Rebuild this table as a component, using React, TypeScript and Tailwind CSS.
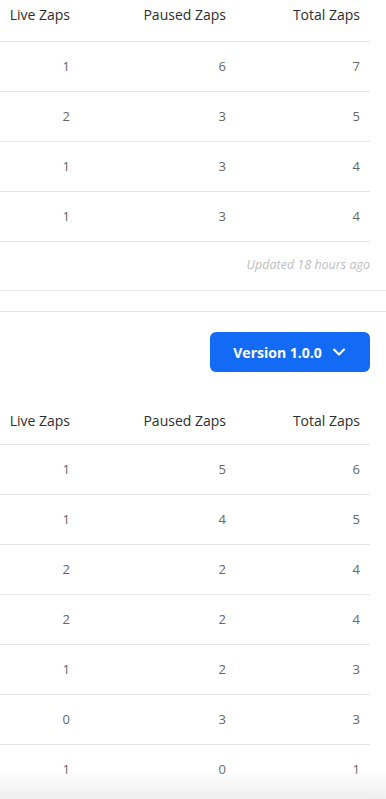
import { ChevronDown } from 'lucide-react';

type Row = [number, number, number];

const firstRows: Row[] = [
  [1, 6, 7],
  [2, 3, 5],
  [1, 3, 4],
  [1, 3, 4],
];

const secondRows: Row[] = [
  [1, 5, 6],
  [1, 4, 5],
  [2, 2, 4],
  [2, 2, 4],
  [1, 2, 3],
  [0, 3, 3],
  [1, 0, 1],
];

const cols = 'grid grid-cols-[80px_156px_134px] w-[370px]';

function HeaderRow({ className }: { className: string }) {
  return (
    <div
      className={`${cols} border-b border-[#e6e6e6] text-[14px] leading-5 text-[#2d2e2e] ${className}`}
    >
      <div className="text-right pr-[10px]">Live Zaps</div>
      <div className="text-right pr-[10px]">Paused Zaps</div>
      <div className="text-right pr-[10px]">Total Zaps</div>
    </div>
  );
}

function DataRows({ rows }: { rows: Row[] }) {
  return (
    <>
      {rows.map((r, i) => (
        <div
          key={i}
          className={`${cols} h-[50px] items-center border-b border-[#e6e6e6] text-[13px] text-[#666666]`}
        >
          {r.map((v, j) => (
            <div key={j} className="text-right pr-[10px]">
              {v}
            </div>
          ))}
        </div>
      ))}
    </>
  );
}

export default function App() {
  return (
    <div
      className="relative h-[799px] w-[386px] overflow-hidden bg-white"
      style={{ fontFamily: '"Open Sans", "Liberation Sans", sans-serif' }}
    >
      {/* first card */}
      <div className="border-b border-[#e6e6e6]">
        <HeaderRow className="h-[42px] pt-[5px]" />
        <DataRows rows={firstRows} />
        <div className="flex h-[48px] w-[370px] items-center justify-end pb-[2px]">
          <span className="text-[12.5px] italic text-[#bdbdbd]">
            Updated 18 hours ago
          </span>
        </div>
      </div>

      {/* second card */}
      <div className="mt-[20px] border-t border-[#e6e6e6]">
        <div className="flex w-[370px] justify-end pt-[20px]">
          <button className="flex h-[40px] w-[160px] items-center justify-center gap-[7px] rounded-[6px] bg-[#136bf5] pl-[2px] text-[14px] font-bold text-white">
            <span>Version 1.0.0</span>
            <ChevronDown size={20} strokeWidth={2.5} />
          </button>
        </div>
        <HeaderRow className="h-[73px] items-end pb-[13px]" />
        <DataRows rows={secondRows} />
      </div>

      <div className="pointer-events-none absolute bottom-0 left-0 h-[30px] w-full bg-gradient-to-b from-white/0 to-[#efefef]" />
    </div>
  );
}
